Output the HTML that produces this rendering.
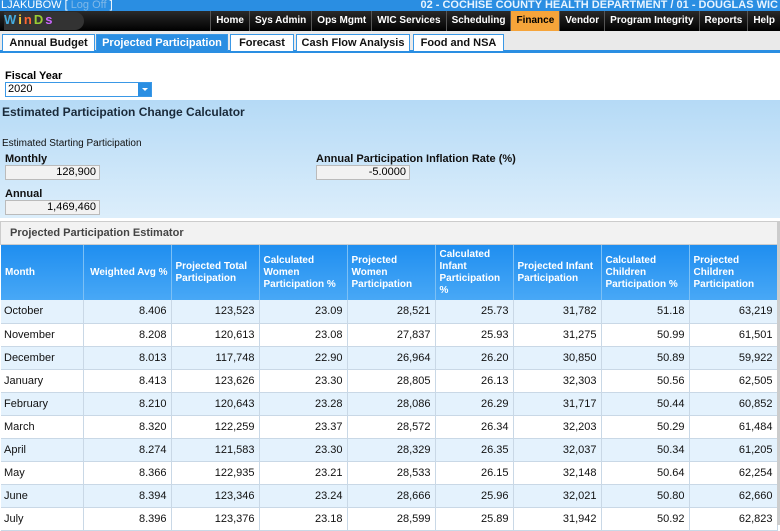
<!DOCTYPE html>
<html><head><style>
*{margin:0;padding:0;box-sizing:border-box}
body{width:780px;height:525px;overflow:hidden;font-family:"Liberation Sans",Arial,sans-serif;font-size:11px;background:#fff;position:relative}
.top{position:absolute;left:0;top:0;width:780px;height:11px;background:#2a8ee2;color:#fff;font-size:11px;line-height:11px}
.top .l{position:absolute;left:1px;top:0}
.top .r{position:absolute;right:2px;top:0;font-weight:bold;color:#e8f4ff}
.nav{position:absolute;left:0;top:11px;width:780px;height:20px;background:linear-gradient(#2a2a2a,#000)}
.logo{position:absolute;left:4px;top:1px;width:80px;height:18px;border-radius:0 20px 20px 0;background:#333;}
.logo span{font-weight:bold;font-size:13px;margin-right:2px}
.menu{position:absolute;right:0;top:0;height:20px;display:flex}
.menu div{color:#fff;font-weight:bold;font-size:10px;line-height:20px;padding:0 5px;border-left:1px solid #555}
.menu .on{background:#f6a43a;color:#000}
.tabs{position:absolute;left:0;top:31px;width:780px;height:22px;background:#eaeaea;border-bottom:3px solid #2a8ee2}
.tab{position:absolute;top:3px;height:17px;background:#fff;border:1px solid #3a98e6;border-bottom:none;font-weight:bold;font-size:11px;line-height:16px;text-align:center;color:#111}
.tab.on{background:#2a8ee2;color:#fff}
.fy{position:absolute;left:5px;top:70px;font-weight:bold;font-size:11px}
.sel{position:absolute;left:5px;top:82px;width:147px;height:15px;border:1px solid #3a98e6;font-size:11px;line-height:13px;padding-left:2px}
.sel b{position:absolute;right:0;top:0;width:13px;height:13px;background:#2a8ee2}
.sel b:after{content:"";position:absolute;left:4px;top:5px;border:3px solid transparent;border-top-color:#fff}
.calc{position:absolute;left:0;top:100px;width:780px;height:118px;background:linear-gradient(#b5daf6,#dceefb)}
.calc .t{position:absolute;left:2px;top:5px;font-weight:bold;font-size:12px;color:#1a2a3a}
.lbl{position:absolute;font-size:10px;color:#111}
.lb{position:absolute;font-weight:bold;font-size:11px;color:#111}
.inp{position:absolute;height:15px;background:#f2f2f2;border:1px solid #bbb;text-align:right;padding-right:3px;font-size:11px;line-height:13px}
.est{position:absolute;left:0;top:221px;width:780px;height:24px;background:#f2f2f2;border:1px solid #ccc;font-weight:bold;font-size:11px;color:#444;line-height:22px;padding-left:9px}
table{position:absolute;left:1px;top:245px;border-collapse:collapse;table-layout:fixed;width:776px}
th{background:linear-gradient(#1f8ef0,#48a8f6);color:#fff;font-weight:bold;font-size:10px;text-align:left;vertical-align:middle;padding:0 3px 0 4px;height:55px;border-right:1px solid #7cc0f5;line-height:12px}
td{height:23px;font-size:11px;text-align:right;padding:0 4px;border-right:1px solid #c9d8e6;border-bottom:1px solid #c9d8e6;color:#111}
td:first-child{text-align:left;padding-left:3px}
tr:nth-child(even) td{background:#e4f2fd}
tr:nth-child(odd) td{background:#fff}
.sb{position:absolute;left:777px;top:221px;width:3px;height:304px;background:#ccc}
</style></head><body>
<div class="top"><span class="l">LJAKUBOW [ <span style="color:#7fb8e8">Log Off</span> ]</span><span class="r">02 - COCHISE COUNTY HEALTH DEPARTMENT / 01 - DOUGLAS WIC</span></div>
<div class="nav"><div class="logo"><span style="color:#4ad">W</span><span style="color:#fc3">i</span><span style="color:#f63">n</span><span style="color:#9c3">D</span><span style="color:#c6f">s</span></div>
<div class="menu"><div>Home</div><div>Sys Admin</div><div>Ops Mgmt</div><div>WIC Services</div><div>Scheduling</div><div class="on">Finance</div><div>Vendor</div><div>Program Integrity</div><div>Reports</div><div>Help</div></div></div>
<div class="tabs">
<div class="tab" style="left:2px;width:93px">Annual Budget</div>
<div class="tab on" style="left:96px;width:132px">Projected Participation</div>
<div class="tab" style="left:230px;width:64px">Forecast</div>
<div class="tab" style="left:296px;width:114px">Cash Flow Analysis</div>
<div class="tab" style="left:413px;width:91px">Food and NSA</div>
</div>
<div class="fy">Fiscal Year</div>
<div class="sel">2020<b></b></div>
<div class="calc"><div class="t">Estimated Participation Change Calculator</div>
<div class="lbl" style="left:2px;top:38px">Estimated Starting Participation</div>
<div class="lb" style="left:5px;top:53px">Monthly</div>
<div class="inp" style="left:5px;top:65px;width:95px">128,900</div>
<div class="lb" style="left:316px;top:53px">Annual Participation Inflation Rate (%)</div>
<div class="inp" style="left:316px;top:65px;width:94px">-5.0000</div>
<div class="lb" style="left:5px;top:88px">Annual</div>
<div class="inp" style="left:5px;top:100px;width:95px">1,469,460</div>
</div>
<div class="est">Projected Participation Estimator</div>
<table>
<colgroup><col style="width:82px"><col style="width:88px"><col style="width:88px"><col style="width:88px"><col style="width:88px"><col style="width:78px"><col style="width:88px"><col style="width:88px"><col style="width:88px"></colgroup>
<tr><th>Month</th><th style="text-align:right;white-space:nowrap">Weighted Avg %</th><th>Projected Total Participation</th><th>Calculated Women Participation %</th><th>Projected Women Participation</th><th>Calculated Infant Participation %</th><th>Projected Infant Participation</th><th>Calculated Children Participation %</th><th>Projected Children Participation</th></tr>
<tr><td>October</td><td>8.406</td><td>123,523</td><td>23.09</td><td>28,521</td><td>25.73</td><td>31,782</td><td>51.18</td><td>63,219</td></tr>
<tr><td>November</td><td>8.208</td><td>120,613</td><td>23.08</td><td>27,837</td><td>25.93</td><td>31,275</td><td>50.99</td><td>61,501</td></tr>
<tr><td>December</td><td>8.013</td><td>117,748</td><td>22.90</td><td>26,964</td><td>26.20</td><td>30,850</td><td>50.89</td><td>59,922</td></tr>
<tr><td>January</td><td>8.413</td><td>123,626</td><td>23.30</td><td>28,805</td><td>26.13</td><td>32,303</td><td>50.56</td><td>62,505</td></tr>
<tr><td>February</td><td>8.210</td><td>120,643</td><td>23.28</td><td>28,086</td><td>26.29</td><td>31,717</td><td>50.44</td><td>60,852</td></tr>
<tr><td>March</td><td>8.320</td><td>122,259</td><td>23.37</td><td>28,572</td><td>26.34</td><td>32,203</td><td>50.29</td><td>61,484</td></tr>
<tr><td>April</td><td>8.274</td><td>121,583</td><td>23.30</td><td>28,329</td><td>26.35</td><td>32,037</td><td>50.34</td><td>61,205</td></tr>
<tr><td>May</td><td>8.366</td><td>122,935</td><td>23.21</td><td>28,533</td><td>26.15</td><td>32,148</td><td>50.64</td><td>62,254</td></tr>
<tr><td>June</td><td>8.394</td><td>123,346</td><td>23.24</td><td>28,666</td><td>25.96</td><td>32,021</td><td>50.80</td><td>62,660</td></tr>
<tr><td>July</td><td>8.396</td><td>123,376</td><td>23.18</td><td>28,599</td><td>25.89</td><td>31,942</td><td>50.92</td><td>62,823</td></tr>
</table>
<div class="sb"></div>
</body></html>
